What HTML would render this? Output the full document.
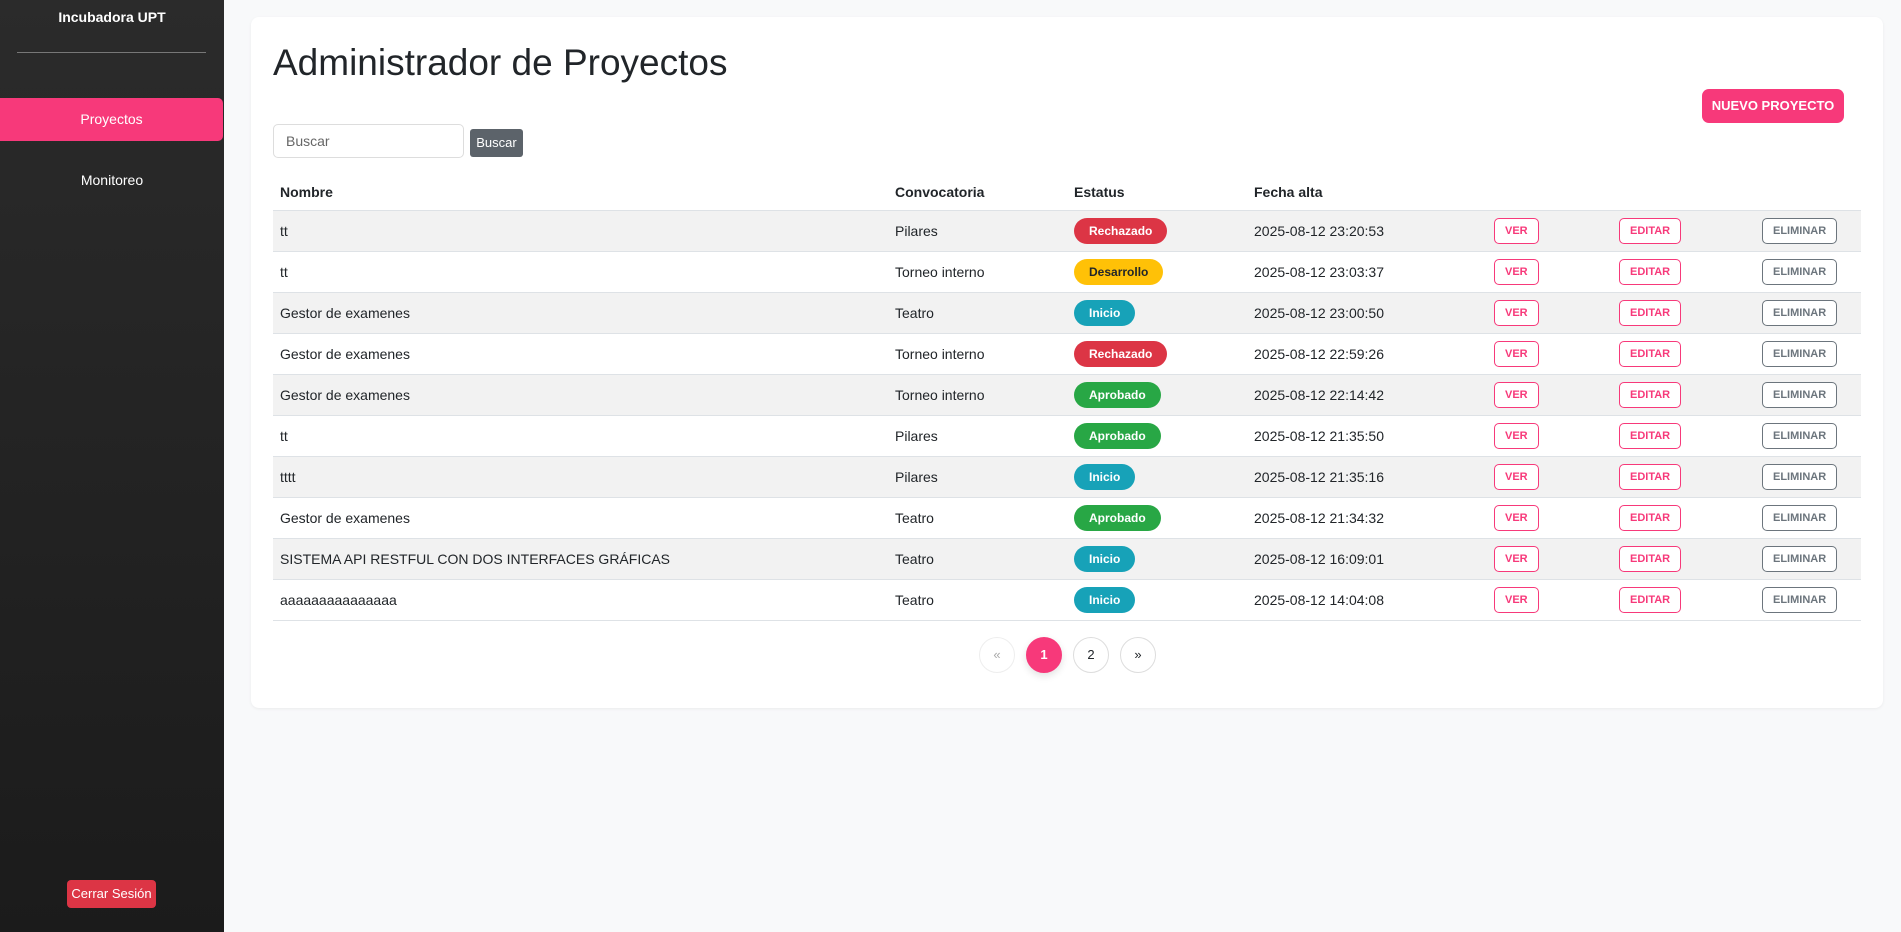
<!DOCTYPE html>
<html><head><meta charset="utf-8"><style>
*{box-sizing:border-box;margin:0;padding:0}
body{width:1901px;height:932px;background:#f8f9fa;font-family:"Liberation Sans",sans-serif;color:#212529;position:relative;overflow:hidden;font-size:14px}
.sb{position:absolute;left:0;top:0;width:224px;height:932px;background:linear-gradient(#2b2b2b,#1b1b1b);color:#fff}
.sb .t{position:absolute;top:9px;width:100%;text-align:center;font-weight:bold;font-size:14px}
.sb hr{position:absolute;left:17px;width:189px;top:52px;border:0;border-top:1px solid #777}
.sb .a{position:absolute;top:98px;left:0;width:223px;height:43px;background:#f7397a;border-radius:0 5px 5px 0;text-align:center;line-height:43px;font-size:14px}
.sb .m{position:absolute;top:172px;width:100%;text-align:center;font-size:14px}
.sb .c{position:absolute;left:67px;top:880px;width:89px;height:28px;background:#dc3545;border-radius:4px;font-size:13px;text-align:center;line-height:28px}
.card{position:absolute;left:251px;top:17px;width:1632px;height:691px;background:#fff;border-radius:8px;box-shadow:0 1px 3px rgba(0,0,0,.06)}
h1{position:absolute;left:273px;top:42px;font-size:37px;font-weight:500}
.nv{position:absolute;left:1702px;top:89px;width:142px;height:34px;background:#f7397a;color:#fff;border-radius:7px;font-weight:bold;font-size:13px;text-align:center;line-height:34px}
.in{position:absolute;left:273px;top:124px;width:191px;height:34px;border:1px solid #ddd;border-radius:5px;padding-left:12px;line-height:32px;color:#666;font-size:14px}
.bb{position:absolute;left:470px;top:129px;width:53px;height:28px;background:#5c636a;color:#fff;border-radius:3px;font-size:13px;text-align:center;line-height:28px}
table{position:absolute;left:273px;top:174px;width:1588px;border-collapse:collapse;font-size:14px}
th{text-align:left;height:36px;font-weight:bold;padding-left:7px;border-bottom:1px solid #dee2e6}
td{height:41px;padding-left:7px;border-bottom:1px solid #dee2e6}
tr:nth-child(even) td{background:#f2f2f2}
.bd{display:inline-block;border-radius:13px;color:#fff;font-weight:bold;font-size:12px;height:26px;line-height:26px;padding:0 15px}
.r{background:#dc3545}.y{background:#ffc107;color:#212529}.i{background:#17a2b8}.g{background:#28a745}
.o{display:inline-block;border:1px solid #f7397a;color:#f7397a;border-radius:5px;font-size:11px;font-weight:bold;height:26px;line-height:24px;padding:0 10px;background:#fff}
.e{border-color:#6c757d;color:#6c757d}
.pg{position:absolute;top:637px;width:36px;height:36px;border-radius:50%;border:1px solid #ddd;text-align:center;line-height:34px;font-size:13px;background:#fff}
</style></head><body>
<div class="sb"><div class="t">Incubadora UPT</div><hr><div class="a">Proyectos</div><div class="m">Monitoreo</div><div class="c">Cerrar Sesión</div></div>
<div class="card"></div>
<h1>Administrador de Proyectos</h1>
<div class="nv">NUEVO PROYECTO</div>
<div class="in">Buscar</div><div class="bb">Buscar</div>
<table>
<colgroup><col style="width:615px"><col style="width:179px"><col style="width:180px"><col style="width:240px"><col style="width:125px"><col style="width:143px"><col></colgroup>
<tr><th>Nombre</th><th>Convocatoria</th><th>Estatus</th><th>Fecha alta</th><th></th><th></th><th></th></tr>
<tr><td>tt</td><td>Pilares</td><td><span class="bd r">Rechazado</span></td><td>2025-08-12 23:20:53</td><td><span class="o">VER</span></td><td><span class="o">EDITAR</span></td><td><span class="o e">ELIMINAR</span></td></tr>
<tr><td>tt</td><td>Torneo interno</td><td><span class="bd y">Desarrollo</span></td><td>2025-08-12 23:03:37</td><td><span class="o">VER</span></td><td><span class="o">EDITAR</span></td><td><span class="o e">ELIMINAR</span></td></tr>
<tr><td>Gestor de examenes</td><td>Teatro</td><td><span class="bd i">Inicio</span></td><td>2025-08-12 23:00:50</td><td><span class="o">VER</span></td><td><span class="o">EDITAR</span></td><td><span class="o e">ELIMINAR</span></td></tr>
<tr><td>Gestor de examenes</td><td>Torneo interno</td><td><span class="bd r">Rechazado</span></td><td>2025-08-12 22:59:26</td><td><span class="o">VER</span></td><td><span class="o">EDITAR</span></td><td><span class="o e">ELIMINAR</span></td></tr>
<tr><td>Gestor de examenes</td><td>Torneo interno</td><td><span class="bd g">Aprobado</span></td><td>2025-08-12 22:14:42</td><td><span class="o">VER</span></td><td><span class="o">EDITAR</span></td><td><span class="o e">ELIMINAR</span></td></tr>
<tr><td>tt</td><td>Pilares</td><td><span class="bd g">Aprobado</span></td><td>2025-08-12 21:35:50</td><td><span class="o">VER</span></td><td><span class="o">EDITAR</span></td><td><span class="o e">ELIMINAR</span></td></tr>
<tr><td>tttt</td><td>Pilares</td><td><span class="bd i">Inicio</span></td><td>2025-08-12 21:35:16</td><td><span class="o">VER</span></td><td><span class="o">EDITAR</span></td><td><span class="o e">ELIMINAR</span></td></tr>
<tr><td>Gestor de examenes</td><td>Teatro</td><td><span class="bd g">Aprobado</span></td><td>2025-08-12 21:34:32</td><td><span class="o">VER</span></td><td><span class="o">EDITAR</span></td><td><span class="o e">ELIMINAR</span></td></tr>
<tr><td>SISTEMA API RESTFUL CON DOS INTERFACES GRÁFICAS</td><td>Teatro</td><td><span class="bd i">Inicio</span></td><td>2025-08-12 16:09:01</td><td><span class="o">VER</span></td><td><span class="o">EDITAR</span></td><td><span class="o e">ELIMINAR</span></td></tr>
<tr><td>aaaaaaaaaaaaaaa</td><td>Teatro</td><td><span class="bd i">Inicio</span></td><td>2025-08-12 14:04:08</td><td><span class="o">VER</span></td><td><span class="o">EDITAR</span></td><td><span class="o e">ELIMINAR</span></td></tr>
</table>
<div class="pg" style="left:979px;color:#aaa;border-color:#eee">«</div>
<div class="pg" style="left:1026px;background:#f7397a;color:#fff;border-color:#f7397a;font-weight:bold;box-shadow:0 3px 8px rgba(0,0,0,.12)">1</div>
<div class="pg" style="left:1073px">2</div>
<div class="pg" style="left:1120px">»</div>
</body></html>
